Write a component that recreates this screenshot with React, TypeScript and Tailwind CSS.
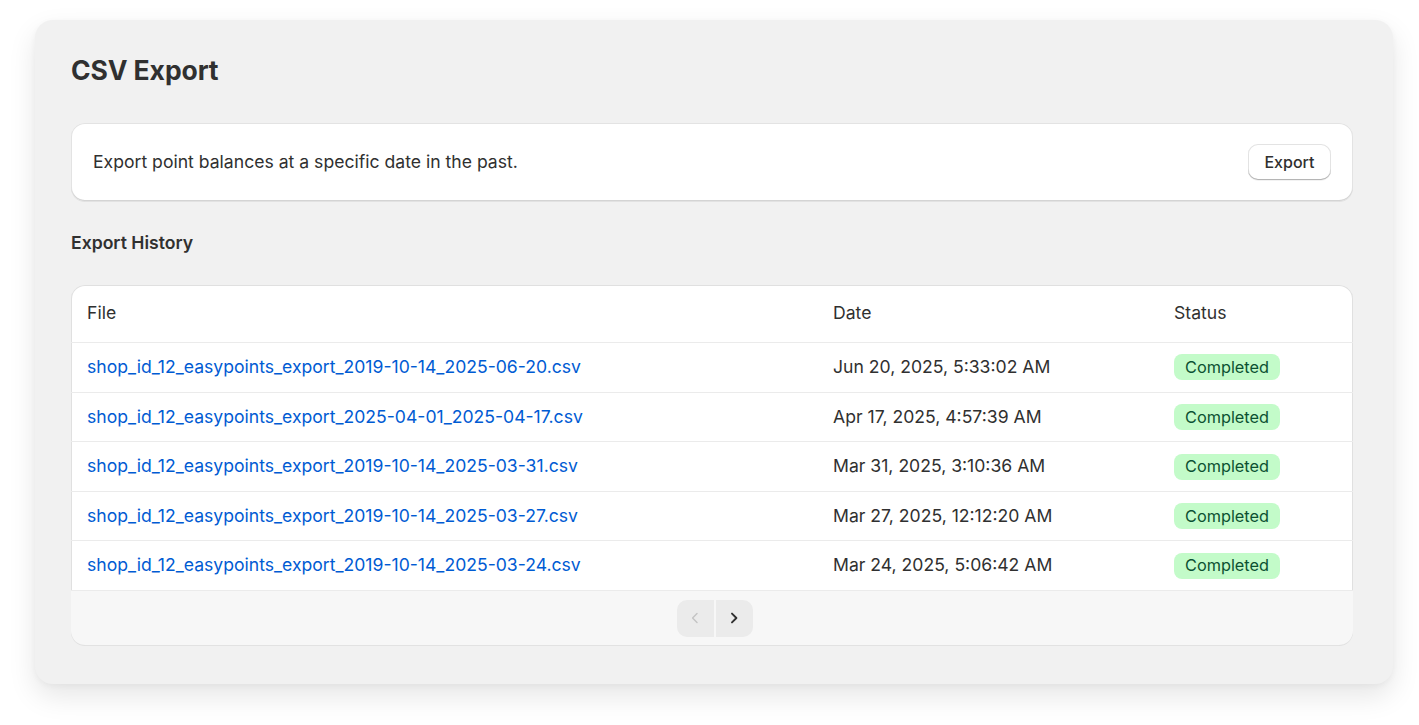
import React from "react";

const rows = [
  ["shop_id_12_easypoints_export_2019-10-14_2025-06-20.csv", "Jun 20, 2025, 5:33:02 AM"],
  ["shop_id_12_easypoints_export_2025-04-01_2025-04-17.csv", "Apr 17, 2025, 4:57:39 AM"],
  ["shop_id_12_easypoints_export_2019-10-14_2025-03-31.csv", "Mar 31, 2025, 3:10:36 AM"],
  ["shop_id_12_easypoints_export_2019-10-14_2025-03-27.csv", "Mar 27, 2025, 12:12:20 AM"],
  ["shop_id_12_easypoints_export_2019-10-14_2025-03-24.csv", "Mar 24, 2025, 5:06:42 AM"],
];

export default function App() {
  return (
    <div
      className="min-h-[725px] w-full bg-white pl-[35px] pr-[26px] pt-[20px] pb-[41px] text-[#303030]"
      style={{ fontFamily: "Inter, 'Noto Sans', sans-serif" }}
    >
      <div className="rounded-[18px] bg-[#f1f1f1] pl-[36px] pr-[40px] pt-[34px] pb-[39px] shadow-[0_12px_28px_rgba(0,0,0,0.10),0_2px_6px_rgba(0,0,0,0.04)]">
        <h1 className="text-[26.5px] font-bold leading-[32px] text-[#303030] tracking-[-0.1px]">CSV Export</h1>

        <div className="mt-[37px] flex h-[78px] items-center justify-between rounded-[14px] bg-white pl-[22px] pr-[22px] shadow-[0_1px_0_rgba(26,26,26,0.07),inset_0_-1px_0_#d4d4d4,inset_0_0_0_1px_#e3e3e3]">
          <span className="text-[17.6px] text-[#303030]">Export point balances at a specific date in the past.</span>
          <button className="h-[36px] rounded-[10px] bg-white px-[16.5px] text-[16px] font-medium text-[#303030] shadow-[inset_0_-1px_0_#b5b5b5,inset_0_0_0_1px_#e3e3e3,0_1px_0_rgba(0,0,0,0.05)]">
            Export
          </button>
        </div>

        <h2 className="mt-[30px] text-[17.6px] font-semibold leading-[24px] text-[#303030]">Export History</h2>

        <div className="mt-[30px] overflow-hidden rounded-[14px] bg-white shadow-[inset_0_-1px_0_#d0d0d0,inset_0_0_0_1px_#e0e0e0,0_1px_0_rgba(26,26,26,0.07)]">
          <div className="grid h-[58px] grid-cols-[746px_341px_1fr] items-center border-b border-[#ebebeb] pl-[16px] text-[17.6px] text-[#303030]">
            <span>File</span>
            <span>Date</span>
            <span>Status</span>
          </div>
          {rows.map(([f, d], i) => (
            <div
              key={i}
              className="grid h-[49.6px] grid-cols-[746px_341px_1fr] items-center border-b border-[#ebebeb] pl-[16px] text-[17.6px]"
            >
              <span className="text-[#005bd3]">{f}</span>
              <span className="text-[#303030]">{d}</span>
              <span>
                <span className="inline-flex h-[26px] items-center rounded-[8px] bg-[#c3fbc9] px-[11px] text-[16.3px] text-[#0c5132]">
                  Completed
                </span>
              </span>
            </div>
          ))}
          <div className="flex h-[54px] items-center justify-center bg-[#f7f7f7] pt-[1px] pl-[5px]">
            <div className="flex gap-[2px] overflow-hidden rounded-[10px]">
              <button className="flex h-[37px] w-[37px] items-center justify-center bg-[#ebebeb]">
                <svg width="16" height="16" viewBox="0 0 20 20" fill="none">
                  <path d="M12.5 4.5 7 10l5.5 5.5" stroke="#c4c4c4" strokeWidth="1.8" strokeLinecap="round" strokeLinejoin="round" />
                </svg>
              </button>
              <button className="flex h-[37px] w-[37px] items-center justify-center bg-[#ebebeb]">
                <svg width="16" height="16" viewBox="0 0 20 20" fill="none">
                  <path d="M7.5 4.5 13 10l-5.5 5.5" stroke="#303030" strokeWidth="2.4" strokeLinecap="round" strokeLinejoin="round" />
                </svg>
              </button>
            </div>
          </div>
        </div>
      </div>
    </div>
  );
}
